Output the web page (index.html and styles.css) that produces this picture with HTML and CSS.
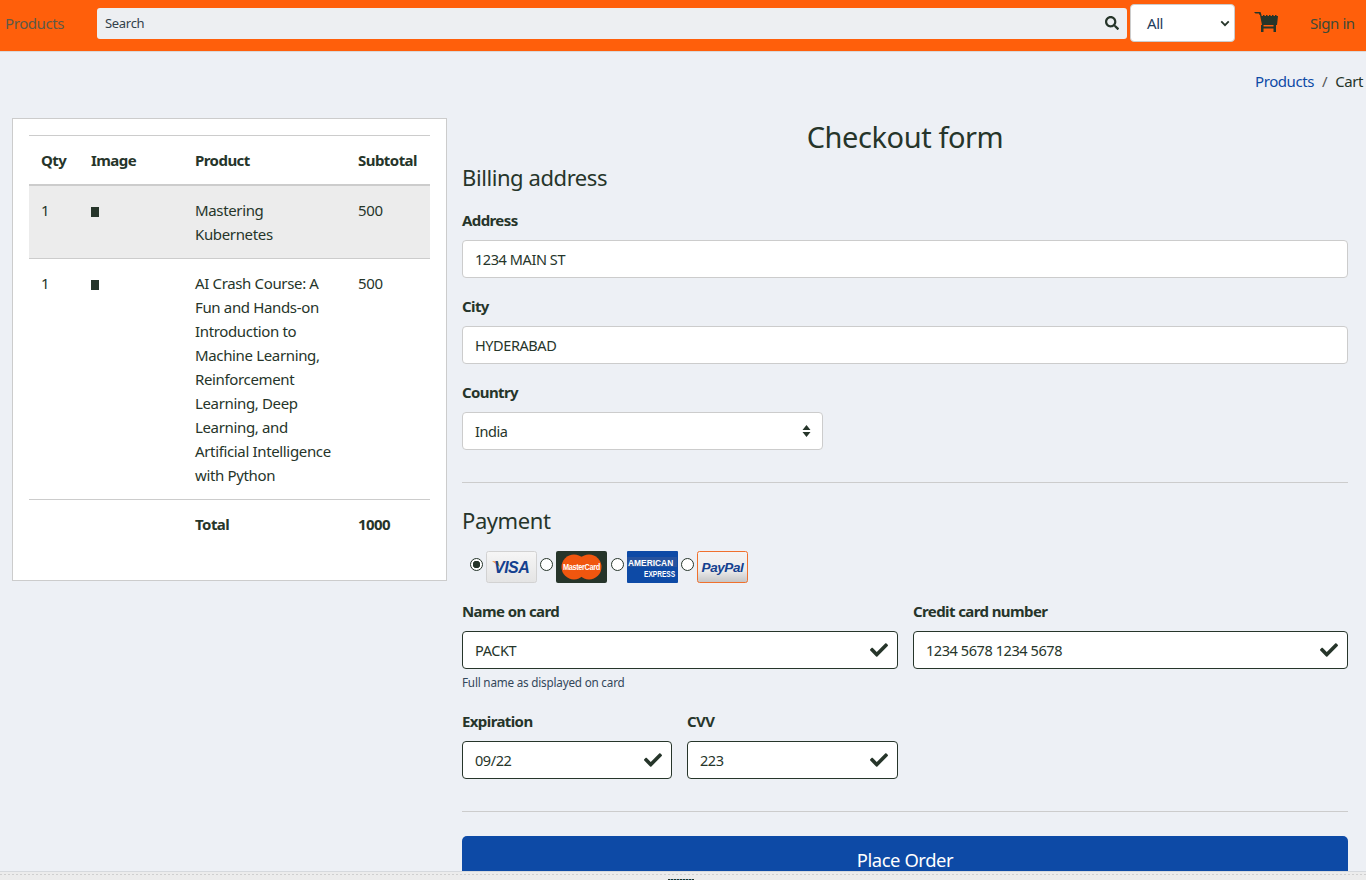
FILE: index.html
```html
<!DOCTYPE html>
<html>
<head>
<meta charset="utf-8">
<title>Checkout</title>
<link rel="stylesheet" href="styles.css">
</head>
<body>

<nav class="navbar">
  <a class="brand">Products</a>
  <div class="search">
    <span>Search</span>
    <svg class="search-icon" viewBox="0 0 512 512"><path d="M505 442.7L405.3 343c-4.5-4.5-10.6-7-17-7H372c27.6-35.3 44-79.7 44-128C416 93.1 322.9 0 208 0S0 93.1 0 208s93.1 208 208 208c48.3 0 92.7-16.4 128-44v16.3c0 6.4 2.5 12.5 7 17l99.7 99.7c9.4 9.4 24.6 9.4 33.9 0l28.3-28.3c9.4-9.4 9.4-24.6.1-34zM208 336c-70.7 0-128-57.2-128-128 0-70.7 57.2-128 128-128 70.7 0 128 57.2 128 128 0 70.7-57.2 128-128 128z"/></svg>
  </div>
  <div class="category">
    <span>All</span>
    <svg class="chevron" viewBox="0 0 12 8"><path d="M1.5 1.5L6 6l4.5-4.5" fill="none" stroke="#26352a" stroke-width="2.2"/></svg>
  </div>
  <svg class="cart" viewBox="0 0 24 20">
    <path d="M0 0h6.5l1 3h-2l-.5-1.500H1.500z"/>
    <path d="M6 3h1.500v1H9V3h1.500v1H12V3h1.500v1H15V3h1.500v1H18V3h1.500v1H21V3h1.500v1H24l-1 9H8z"/>
    <path d="M7 13h2.500v1.500h10V13H22v7h-2.500v-3.500h-10V20H7z"/>
  </svg>
  <a class="signin">Sign in</a>
</nav>

<div class="crumbs"><a>Products</a><i>/</i><span>Cart</span></div>

<div class="main">
  <div class="card">
    <table class="items">
      <thead>
        <tr><th class="c-qty">Qty</th><th class="c-img">Image</th><th class="c-prod">Product</th><th>Subtotal</th></tr>
      </thead>
      <tbody>
        <tr class="odd"><td>1</td><td><b class="thumb"></b></td><td>Mastering Kubernetes</td><td>500</td></tr>
        <tr><td>1</td><td><b class="thumb"></b></td><td>AI Crash Course: A Fun and Hands-on Introduction to Machine Learning, Reinforcement Learning, Deep Learning, and Artificial Intelligence with Python</td><td>500</td></tr>
        <tr class="total"><td></td><td></td><th>Total</th><th>1000</th></tr>
      </tbody>
    </table>
  </div>

  <form class="checkout">
    <h2>Checkout form</h2>
    <h4>Billing address</h4>
    <label>Address</label>
    <div class="input">1234 MAIN ST</div>
    <label>City</label>
    <div class="input">HYDERABAD</div>
    <label>Country</label>
    <div class="input country">India
      <svg class="updown" viewBox="0 0 8 12"><path d="M4 0l4 5H0zM4 12L0 7h8z"/></svg>
    </div>
    <hr class="rule-1">
    <h4 class="pay-title">Payment</h4>
    <div class="methods">
      <span class="radio on"></span>
      <svg class="pay" viewBox="0 0 51 32">
        <defs><linearGradient id="vs" x1="0" y1="0" x2="0" y2="1"><stop offset="0" stop-color="#f6f6f6"/><stop offset="1" stop-color="#e4e4e4"/></linearGradient></defs>
        <rect x=".5" y=".5" width="50" height="31" rx="2" fill="url(#vs)" stroke="#d2d2d2"/>
        <path d="M6 10l6 .5 2 5.500z" fill="#ee9a3a"/>
        <text x="8" y="22" class="t-visa">VISA</text>
      </svg>
      <span class="radio"></span>
      <svg class="pay pay-mc" viewBox="0 0 51 32">
        <rect width="51" height="32" rx="2" fill="#26352a"/>
        <circle cx="18" cy="16" r="12.500" fill="#f0560f"/>
        <circle cx="33" cy="16" r="12.500" fill="#f0560f"/>
        <text x="25.500" y="19" class="t-mc" textLength="37" lengthAdjust="spacingAndGlyphs">MasterCard</text>
      </svg>
      <span class="radio"></span>
      <svg class="pay" viewBox="0 0 51 32">
        <rect width="51" height="32" rx="1" fill="#0d4aa6"/>
        <rect x="0" y="6" width="50" height="10" fill="#26539f"/>
        <text transform="translate(1 15) scale(1 1.150)" class="t-amex">AMERICAN</text>
        <text transform="translate(17 26) scale(1 1.250)" class="t-exp">EXPRESS</text>
      </svg>
      <span class="radio"></span>
      <svg class="pay" viewBox="0 0 51 32">
        <defs><linearGradient id="pp" x1="0" y1="0" x2="0" y2="1"><stop offset="0" stop-color="#f4f4f4"/><stop offset=".6" stop-color="#ececec"/><stop offset="1" stop-color="#c4c4c4"/></linearGradient></defs>
        <rect x=".5" y=".5" width="50" height="31" rx="2" fill="url(#pp)" stroke="#f0702c"/>
        <text x="25.500" y="20.500" class="t-pp">PayPal</text>
      </svg>
    </div>

    <div class="row-two">
      <div>
        <label>Name on card</label>
        <div class="input valid">PACKT<svg class="tick" viewBox="0 0 512 512"><use href="#tick"/></svg></div>
        <small>Full name as displayed on card</small>
      </div>
      <div>
        <label>Credit card number</label>
        <div class="input valid">1234 5678 1234 5678<svg class="tick" viewBox="0 0 512 512"><use href="#tick"/></svg></div>
      </div>
    </div>

    <div class="row-exp">
      <div>
        <label>Expiration</label>
        <div class="input valid">09/22<svg class="tick" viewBox="0 0 512 512"><use href="#tick"/></svg></div>
      </div>
      <div>
        <label>CVV</label>
        <div class="input valid">223<svg class="tick" viewBox="0 0 512 512"><use href="#tick"/></svg></div>
      </div>
    </div>

    <hr class="rule-2">
    <div class="place">Place Order</div>
  </form>
</div>

<div class="statusbar"><i></i></div>

<svg class="defs" width="0" height="0"><defs><path id="tick" d="M173.898 439.404l-166.4-166.4c-9.997-9.997-9.997-26.206 0-36.204l36.203-36.204c9.997-9.998 26.207-9.998 36.204 0L192 312.69 432.095 72.596c9.997-9.997 26.207-9.997 36.204 0l36.203 36.204c9.997 9.997 9.997 26.206 0 36.204l-294.4 294.401c-9.998 9.997-26.207 9.997-36.204-.001z"/></defs></svg>

</body>
</html>
```

FILE: styles.css
```css
html, body {
  height: 880px;
  overflow: hidden;
}
body {
  margin: 0;
  background: #edf0f5;
  color: #26352a;
  font: 15px/24px "Noto Sans", "Open Sans", sans-serif;
  letter-spacing: -0.42px;
}

/* top bar */
.navbar {
  height: 52px;
  box-sizing: border-box;
  background: #ff5f0b;
  border-bottom: 1px solid #d9d9d9;
  display: flex;
  align-items: flex-start;
}
.brand {
  width: 97px;
  padding: 11px 0 0 5px;
  box-sizing: border-box;
  color: #5d5a48;
  flex: none;
}
.search {
  width: 1030px;
  height: 31px;
  margin-top: 8px;
  box-sizing: border-box;
  background: #edeff2;
  border-radius: 3px;
  padding: 0 8px 2px;
  display: flex;
  align-items: center;
  justify-content: space-between;
  font-size: 13px;
  letter-spacing: -0.3px;
  color: #33414a;
  flex: none;
}
.search-icon {
  width: 14px;
  height: 14px;
  fill: #26352a;
}
.category {
  width: 105px;
  height: 38px;
  margin: 4px 0 0 3px;
  box-sizing: border-box;
  background: #fff;
  border: 1px solid #ccc;
  border-radius: 4px;
  padding: 0 4px 0 16px;
  display: flex;
  align-items: center;
  justify-content: space-between;
  color: #1f3d5c;
  flex: none;
}
.chevron {
  width: 10px;
  height: 7px;
}
.cart {
  width: 24px;
  height: 20px;
  margin: 12px 0 0 19px;
  fill: #26352a;
  flex: none;
}
.signin {
  margin: 11px 0 0 32px;
  color: #3d4a38;
}

.crumbs {
  height: 24px;
  margin-top: 17px;
  padding-right: 3px;
  display: flex;
  justify-content: flex-end;
}
.crumbs a {
  color: #0d4aa6;
}
.crumbs i {
  font-style: normal;
  margin: 0 8px;
  color: #555;
}

/* page columns */
.main {
  display: flex;
  align-items: flex-start;
  padding: 25px 18px 0 12px;
  gap: 15px;
}
.card {
  width: 435px;
  height: 463px;
  box-sizing: border-box;
  flex: none;
  background: #fff;
  border: 1px solid #ccc;
  padding: 16px 16px 0;
}
.items {
  width: 401px;
  border-collapse: collapse;
  table-layout: fixed;
  border-top: 1px solid #ccc;
}
.items th, .items td {
  text-align: left;
  vertical-align: top;
  padding: 12px;
}
.items td {
  letter-spacing: -0.35px;
}
.items thead th {
  border-bottom: 2px solid #ccc;
}
.items th {
  font-weight: 700;
  letter-spacing: -0.55px;
}
.c-qty { width: 26px; }
.c-img { width: 80px; }
.c-prod { width: 139px; }
.items tbody td {
  border-bottom: 1px solid #ccc;
}
.items tr.odd td {
  background: #ececec;
}
.items tr.total td, .items tr.total th {
  border: 0;
}
.thumb {
  display: block;
  width: 8px;
  height: 10px;
  margin-top: 9px;
  background: #26352a;
}

/* form */
.checkout {
  flex: 1;
  min-width: 0;
}
h2 {
  margin: 0;
  text-align: center;
  font-size: 29px;
  line-height: 38px;
  font-weight: 400;
}
h4 {
  margin: 7px 0 17px;
  font-size: 22px;
  line-height: 29px;
  font-weight: 400;
}
label {
  display: block;
  font-weight: 700;
  line-height: 22px;
  margin-bottom: 9px;
  letter-spacing: -0.6px;
}
.input {
  height: 38px;
  box-sizing: border-box;
  background: #fff;
  border: 1px solid #ccc;
  border-radius: 4px;
  padding: 0 12px;
  margin-bottom: 17px;
  display: flex;
  align-items: center;
  justify-content: space-between;
  font-size: 14.5px;
}
.country {
  width: 361px;
  margin-bottom: 0;
}
.updown {
  width: 9px;
  height: 12px;
  margin-right: -1px;
  fill: #26352a;
}
hr {
  border: 0;
  border-top: 1px solid #ccc;
  margin: 0;
}
.rule-1 {
  margin-top: 32px;
}
.pay-title {
  margin: 23px 0 0;
}
.methods {
  display: flex;
  align-items: flex-start;
  height: 32px;
  margin: 16px 0 17px 8px;
}
.radio {
  width: 11px;
  height: 11px;
  margin: 7px 3px 0 0;
  border: 1px solid #26352a;
  border-radius: 50%;
  background: #fff;
}
.radio.on {
  background: radial-gradient(circle, #26352a 0 3.5px, #fff 4px);
}
.pay {
  width: 51px;
  height: 32px;
  margin-right: 3px;
  flex: none;
}
.pay-mc {
  margin-right: 4px;
}
.t-visa {
  font: italic 700 16px "Liberation Sans", sans-serif;
  fill: #14418f;
  letter-spacing: -0.5px;
}
.t-mc {
  font: 700 8.5px "Liberation Sans", sans-serif;
  fill: #fff;
  text-anchor: middle;
}
.t-amex {
  font: 700 8.4px "Liberation Sans", sans-serif;
  fill: #fff;
  letter-spacing: 0;
}
.t-exp {
  font: 700 6.6px "Liberation Sans", sans-serif;
  fill: #fff;
  letter-spacing: 0;
}
.t-pp {
  font: italic 700 13.5px "Liberation Sans", sans-serif;
  fill: #14418f;
  text-anchor: middle;
}
.row-two {
  display: grid;
  grid-template-columns: 436px 435px;
  gap: 15px;
}
.row-two .input, .row-exp .input {
  margin-bottom: 0;
}
.valid {
  border-color: #26352a;
}
.tick {
  width: 18px;
  height: 18px;
  margin-right: -3px;
  fill: #26352a;
}
small {
  display: block;
  font-size: 11.7px;
  line-height: 14px;
  margin-top: 6px;
  letter-spacing: -0.2px;
  color: #33475a;
}
.row-exp {
  display: grid;
  grid-template-columns: 210px 211px;
  gap: 15px;
  margin-top: 21px;
}
.rule-2 {
  margin-top: 32px;
}
.place {
  margin-top: 24px;
  height: 50px;
  background: #0d4aa6;
  border-radius: 5px 5px 0 0;
  color: #fff;
  text-align: center;
  font-size: 18.4px;
  line-height: 48px;
}

.statusbar {
  position: fixed;
  left: 0;
  right: 0;
  bottom: 0;
  height: 8px;
  background: #ececec;
  border-top: 1px solid #d6d9dd;
}
.statusbar::before {
  content: "";
  position: absolute;
  left: 0;
  right: 0;
  top: 2px;
  height: 1px;
  background: repeating-linear-gradient(90deg, #cfcfcf 0 2px, #ececec 2px 4px);
}
.statusbar i {
  position: absolute;
  left: 668px;
  bottom: 0;
  width: 26px;
  height: 1px;
  background: repeating-linear-gradient(90deg, #26352a 0 2px, #6aa3c8 2px 3px);
}
.defs {
  position: absolute;
}
```
